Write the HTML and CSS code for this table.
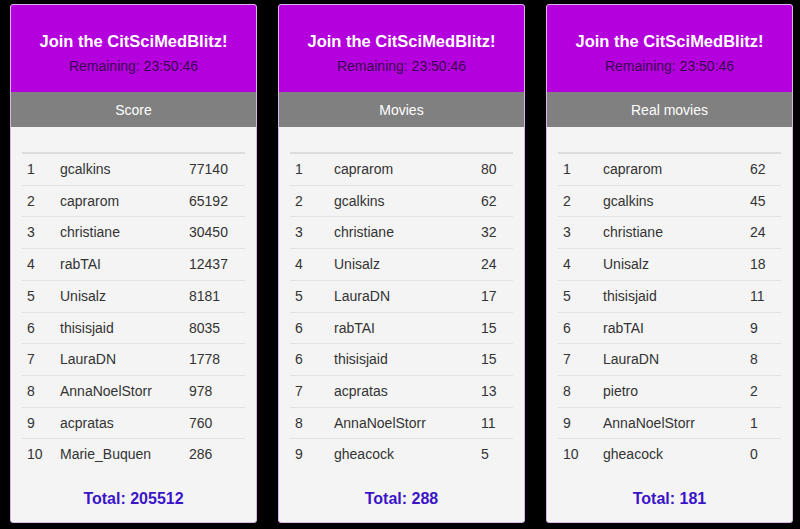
FILE: index.html
```html
<!DOCTYPE html>
<html>
<head>
<meta charset="utf-8">
<link rel="stylesheet" href="styles.css">
</head>
<body>
<div class="board">
  <div class="card">
    <div class="head">
      <div class="title">Join the CitSciMedBlitz!</div>
      <div class="remain">Remaining: 23:50:46</div>
    </div>
    <div class="bar">Score</div>
    <div class="body">
      <table class="rank c1">
        <tr><td>1</td><td>gcalkins</td><td>77140</td></tr>
        <tr><td>2</td><td>caprarom</td><td>65192</td></tr>
        <tr><td>3</td><td>christiane</td><td>30450</td></tr>
        <tr><td>4</td><td>rabTAI</td><td>12437</td></tr>
        <tr><td>5</td><td>Unisalz</td><td>8181</td></tr>
        <tr><td>6</td><td>thisisjaid</td><td>8035</td></tr>
        <tr><td>7</td><td>LauraDN</td><td>1778</td></tr>
        <tr><td>8</td><td>AnnaNoelStorr</td><td>978</td></tr>
        <tr><td>9</td><td>acpratas</td><td>760</td></tr>
        <tr><td>10</td><td>Marie_Buquen</td><td>286</td></tr>
      </table>
      <div class="total">Total: 205512</div>
    </div>
  </div>
  <div class="card">
    <div class="head">
      <div class="title">Join the CitSciMedBlitz!</div>
      <div class="remain">Remaining: 23:50:46</div>
    </div>
    <div class="bar">Movies</div>
    <div class="body">
      <table class="rank c2">
        <tr><td>1</td><td>caprarom</td><td>80</td></tr>
        <tr><td>2</td><td>gcalkins</td><td>62</td></tr>
        <tr><td>3</td><td>christiane</td><td>32</td></tr>
        <tr><td>4</td><td>Unisalz</td><td>24</td></tr>
        <tr><td>5</td><td>LauraDN</td><td>17</td></tr>
        <tr><td>6</td><td>rabTAI</td><td>15</td></tr>
        <tr><td>6</td><td>thisisjaid</td><td>15</td></tr>
        <tr><td>7</td><td>acpratas</td><td>13</td></tr>
        <tr><td>8</td><td>AnnaNoelStorr</td><td>11</td></tr>
        <tr><td>9</td><td>gheacock</td><td>5</td></tr>
      </table>
      <div class="total">Total: 288</div>
    </div>
  </div>
  <div class="card">
    <div class="head">
      <div class="title">Join the CitSciMedBlitz!</div>
      <div class="remain">Remaining: 23:50:46</div>
    </div>
    <div class="bar">Real movies</div>
    <div class="body">
      <table class="rank c3">
        <tr><td>1</td><td>caprarom</td><td>62</td></tr>
        <tr><td>2</td><td>gcalkins</td><td>45</td></tr>
        <tr><td>3</td><td>christiane</td><td>24</td></tr>
        <tr><td>4</td><td>Unisalz</td><td>18</td></tr>
        <tr><td>5</td><td>thisisjaid</td><td>11</td></tr>
        <tr><td>6</td><td>rabTAI</td><td>9</td></tr>
        <tr><td>7</td><td>LauraDN</td><td>8</td></tr>
        <tr><td>8</td><td>pietro</td><td>2</td></tr>
        <tr><td>9</td><td>AnnaNoelStorr</td><td>1</td></tr>
        <tr><td>10</td><td>gheacock</td><td>0</td></tr>
      </table>
      <div class="total">Total: 181</div>
    </div>
  </div>
</div>
</body>
</html>
```
FILE: styles.css
```css
html, body {
  margin: 0;
  padding: 0;
  background: #000;
  width: 800px;
  height: 529px;
  overflow: hidden;
}
body {
  font-family: "Liberation Sans", Arial, sans-serif;
}
.board {
  display: flex;
  gap: 21px;
  padding: 4px 0 0 10px;
}
.card {
  width: 245px;
  border: 1px solid #dcb4ec;
  border-radius: 3px;
  background: #f4f4f4;
  overflow: hidden;
}
.head {
  background: #b400dc;
  height: 87px;
  box-sizing: border-box;
  padding-top: 26px;
  text-align: center;
}
.title {
  color: #fff;
  font-weight: bold;
  font-size: 16.5px;
  line-height: 20px;
}
.remain {
  color: #3a0052;
  font-size: 14px;
  line-height: 16px;
  margin-top: 7px;
}
.bar {
  background: #808080;
  color: #fff;
  height: 35px;
  line-height: 36px;
  text-align: center;
  font-size: 14px;
}
.body {
  padding: 25px 11px 0 11px;
  height: 395px;
  box-sizing: border-box;
}
.rank {
  width: 100%;
  border-collapse: collapse;
  border-top: 2px solid #dcdcdc;
  font-size: 14px;
  color: #333;
}
.rank td {
  padding: 7px 5px;
  line-height: 16.7px;
  border-top: 1px solid #e2e2e2;
  white-space: nowrap;
}
.rank tr:first-child td {
  border-top: none;
}
.c1 td:nth-child(1) { width: 23px; }
.c1 td:nth-child(2) { width: 119px; }
.c2 td:nth-child(1) { width: 29px; }
.c2 td:nth-child(2) { width: 137px; }
.c3 td:nth-child(1) { width: 30px; }
.c3 td:nth-child(2) { width: 137px; }
.total {
  text-align: center;
  color: #3b14c8;
  font-weight: bold;
  font-size: 16px;
  margin-top: 20px;
}
```
